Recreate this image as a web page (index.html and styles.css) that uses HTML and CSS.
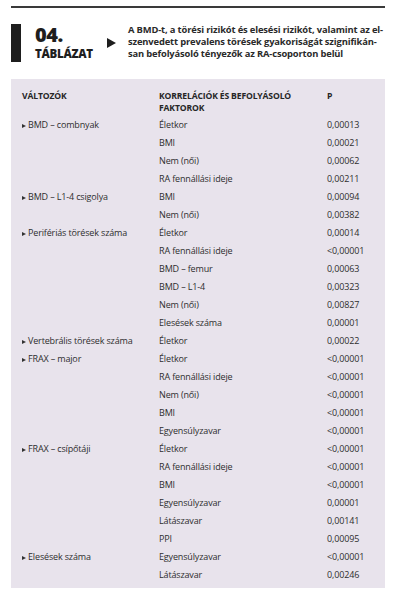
FILE: index.html
```html
<!DOCTYPE html>
<html lang="hu">
<head>
<meta charset="utf-8">
<link rel="stylesheet" href="styles.css">
</head>
<body>
<div class="page">
  <div class="rule"></div>
  <header class="head">
    <div class="bar"></div>
    <div class="title">
      <div class="num">04.</div>
      <div class="label">TÁBLÁZAT</div>
    </div>
    <div class="arrow"></div>
    <p class="caption">A BMD-t, a törési rizikót és elesési rizikót, valamint az el&shy;szenvedett prevalens törések gyakoriságát szignifikán&shy;san befolyásoló tényezők az RA-csoporton belül</p>
  </header>
  <div class="panel">
    <div class="row hdr">
      <div class="c1">VÁLTOZÓK</div>
      <div class="c2">KORRELÁCIÓK ÉS BEFOLYÁSOLÓ FAKTOROK</div>
      <div class="c3">P</div>
    </div>
    <div class="row"><div class="c1 var">BMD – combnyak</div><div class="c2">Életkor</div><div class="c3">0,00013</div></div>
    <div class="row"><div class="c1"></div><div class="c2">BMI</div><div class="c3">0,00021</div></div>
    <div class="row"><div class="c1"></div><div class="c2">Nem (női)</div><div class="c3">0,00062</div></div>
    <div class="row"><div class="c1"></div><div class="c2">RA fennállási ideje</div><div class="c3">0,00211</div></div>
    <div class="row"><div class="c1 var">BMD – L1-4 csigolya</div><div class="c2">BMI</div><div class="c3">0,00094</div></div>
    <div class="row"><div class="c1"></div><div class="c2">Nem (női)</div><div class="c3">0,00382</div></div>
    <div class="row"><div class="c1 var">Perifériás törések száma</div><div class="c2">Életkor</div><div class="c3">0,00014</div></div>
    <div class="row"><div class="c1"></div><div class="c2">RA fennállási ideje</div><div class="c3">&lt;0,00001</div></div>
    <div class="row"><div class="c1"></div><div class="c2">BMD – femur</div><div class="c3">0,00063</div></div>
    <div class="row"><div class="c1"></div><div class="c2">BMD – L1-4</div><div class="c3">0,00323</div></div>
    <div class="row"><div class="c1"></div><div class="c2">Nem (női)</div><div class="c3">0,00827</div></div>
    <div class="row"><div class="c1"></div><div class="c2">Elesések száma</div><div class="c3">0,00001</div></div>
    <div class="row"><div class="c1 var">Vertebrális törések száma</div><div class="c2">Életkor</div><div class="c3">0,00022</div></div>
    <div class="row"><div class="c1 var">FRAX – major</div><div class="c2">Életkor</div><div class="c3">&lt;0,00001</div></div>
    <div class="row"><div class="c1"></div><div class="c2">RA fennállási ideje</div><div class="c3">&lt;0,00001</div></div>
    <div class="row"><div class="c1"></div><div class="c2">Nem (női)</div><div class="c3">&lt;0,00001</div></div>
    <div class="row"><div class="c1"></div><div class="c2">BMI</div><div class="c3">&lt;0,00001</div></div>
    <div class="row"><div class="c1"></div><div class="c2">Egyensúlyzavar</div><div class="c3">&lt;0,00001</div></div>
    <div class="row"><div class="c1 var">FRAX – csípőtáji</div><div class="c2">Életkor</div><div class="c3">&lt;0,00001</div></div>
    <div class="row"><div class="c1"></div><div class="c2">RA fennállási ideje</div><div class="c3">&lt;0,00001</div></div>
    <div class="row"><div class="c1"></div><div class="c2">BMI</div><div class="c3">&lt;0,00001</div></div>
    <div class="row"><div class="c1"></div><div class="c2">Egyensúlyzavar</div><div class="c3">0,00001</div></div>
    <div class="row"><div class="c1"></div><div class="c2">Látászavar</div><div class="c3">0,00141</div></div>
    <div class="row"><div class="c1"></div><div class="c2">PPI</div><div class="c3">0,00095</div></div>
    <div class="row"><div class="c1 var">Elesések száma</div><div class="c2">Egyensúlyzavar</div><div class="c3">&lt;0,00001</div></div>
    <div class="row"><div class="c1"></div><div class="c2">Látászavar</div><div class="c3">0,00246</div></div>
  </div>
</div>
</body>
</html>
```
FILE: styles.css
```css
html, body {
  margin: 0;
  padding: 0;
  background: #ffffff;
}
body {
  font-family: "Open Sans", "Noto Sans", sans-serif;
  color: #333333;
}
.page {
  width: 374px;
  padding: 6px 0 0 11px;
}
.rule {
  height: 2px;
  background: #3a3a3a;
}
.head {
  display: flex;
  align-items: flex-start;
  margin-top: 16px;
  height: 39px;
}
.bar {
  width: 10px;
  height: 38px;
  background: #1e1e1e;
  flex: none;
}
.title {
  margin-left: 14px;
  width: 62px;
  flex: none;
  color: #1e1e1e;
  font-weight: 800;
}
.num {
  font-size: 20px;
  line-height: 20px;
  letter-spacing: -0.5px;
  margin-top: 1px;
}
.label {
  font-size: 11.5px;
  line-height: 14px;
  font-weight: 800;
  letter-spacing: -0.3px;
  margin-top: 2px;
}
.arrow {
  flex: none;
  width: 0;
  height: 0;
  margin: 14px 0 0 10px;
  border-top: 5px solid transparent;
  border-bottom: 5px solid transparent;
  border-left: 9px solid #1e1e1e;
}
.caption {
  margin: 0 0 0 12px;
  font-size: 9.4px;
  line-height: 12px;
  font-weight: 700;
  color: #2a2a2a;
  letter-spacing: -0.15px;
  hyphens: manual;
}
.panel {
  margin-top: 16px;
  background: #e8e3ec;
  padding: 11px 0 4px 12px;
}
.row {
  display: grid;
  grid-template-columns: 136px 168px 1fr;
  height: 18px;
  line-height: 18px;
  font-size: 9px;
  letter-spacing: -0.15px;
  color: #2e2e2e;
}
.row.hdr {
  height: auto;
  line-height: 12px;
  font-weight: 700;
  font-size: 8.6px;
  margin-bottom: 2px;
  color: #262626;
}
.hdr .c2 {
  padding-right: 10px;
}
.var::before {
  content: "";
  display: inline-block;
  width: 0;
  height: 0;
  border-top: 2.5px solid transparent;
  border-bottom: 2.5px solid transparent;
  border-left: 4px solid #333333;
  margin-right: 2px;
  vertical-align: 0.5px;
}
.c1 {
  margin-left: -1px;
}
```
